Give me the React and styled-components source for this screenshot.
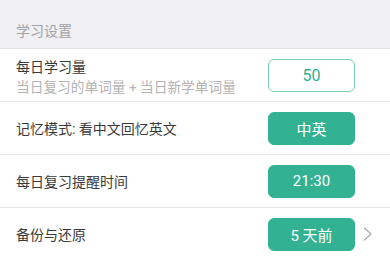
import React from 'react';
import styled, { createGlobalStyle } from 'styled-components';

const GlobalStyle = createGlobalStyle`
  html, body {
    margin: 0;
    padding: 0;
    background: #ffffff;
  }
  body {
    font-family: Roboto, "Noto Sans CJK SC", sans-serif;
  }
`;

const green = '#33b293';

const Page = styled.div`
  width: 390px;
  height: 260px;
  overflow: hidden;
  background: #fff;
`;

const SectionHeader = styled.div`
  height: 49px;
  box-sizing: border-box;
  padding: 21px 16px 0;
  background: #efeff4;
  border-bottom: 1px solid #e2e2e6;
  color: #a3a3a8;
  font-size: 14px;
  line-height: 20px;
`;

const Row = styled.div`
  display: flex;
  align-items: center;
  height: 53px;
  box-sizing: border-box;
  padding-left: 16px;
  border-bottom: 1px solid #e6e6e6;
`;

const Labels = styled.div`
  flex: 1;
  display: flex;
  flex-direction: column;
  justify-content: center;
  padding-top: ${p => (p.$double ? '4px' : '1px')};
`;

const Title = styled.div`
  color: #3a3a3a;
  font-size: 14px;
  line-height: 20px;
`;

const Hint = styled.div`
  color: #b3b3b3;
  font-size: 13.7px;
  line-height: 20px;
`;

const Pill = styled.button`
  width: 87px;
  height: 33px;
  box-sizing: border-box;
  border-radius: 6px;
  font-family: Roboto, "Noto Sans CJK SC", sans-serif;
  font-size: ${p => (p.$outline ? '16px' : '15px')};
  padding: 0;
  border: 1px solid ${p => (p.$outline ? '#7dcdb8' : green)};
  background: ${p => (p.$outline ? '#fff' : green)};
  color: ${p => (p.$outline ? '#2fae8f' : '#fff')};
  display: flex;
  align-items: center;
  justify-content: center;
`;

const Trail = styled.div`
  width: 35px;
  height: 100%;
  display: flex;
  align-items: center;
  justify-content: flex-end;
  padding-right: 17px;
  box-sizing: border-box;
`;

const Chevron = () => (
  <svg width="11" height="16" viewBox="0 0 11 16">
    <path d="M2 1.5 L9 8 L2 14.5" fill="none" stroke="#a8a8a8" strokeWidth="1.2" />
  </svg>
);

const settings = [
  { title: '每日学习量', hint: '当日复习的单词量 + 当日新学单词量', value: '50', outline: true },
  { title: '记忆模式: 看中文回忆英文', value: '中英' },
  { title: '每日复习提醒时间', value: '21:30' },
  { title: '备份与还原', value: '5 天前', more: true },
];

export default function App() {
  return (
    <Page>
      <GlobalStyle />
      <SectionHeader>学习设置</SectionHeader>
      {settings.map(s => (
        <Row key={s.title}>
          <Labels $double={!!s.hint}>
            <Title>{s.title}</Title>
            {s.hint && <Hint>{s.hint}</Hint>}
          </Labels>
          <Pill $outline={s.outline}>{s.value}</Pill>
          <Trail>{s.more && <Chevron />}</Trail>
        </Row>
      ))}
    </Page>
  );
}
